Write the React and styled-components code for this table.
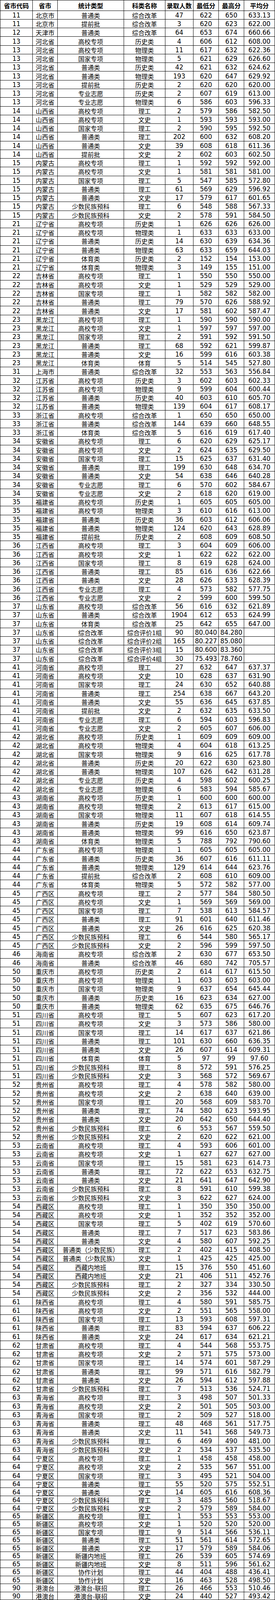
import React from 'react';
import styled, { createGlobalStyle } from 'styled-components';

const GlobalStyle = createGlobalStyle`
  html, body {
    margin: 0;
    padding: 0;
    background: #fff;
  }
`;

const raw = `11 北京市 普通类 综合改革 47 622 650 633.13
11 北京市 提前批 综合改革 3 620 623 622.00
12 天津市 普通类 综合改革 64 653 674 660.66
13 河北省 高校专项 历史类 4 606 612 608.00
13 河北省 高校专项 物理类 11 617 632 622.36
13 河北省 国家专项 物理类 5 621 629 626.60
13 河北省 普通类 历史类 42 621 632 624.62
13 河北省 普通类 物理类 193 620 647 629.92
13 河北省 提前批 历史类 2 620 620 620.00
13 河北省 专业志愿 历史类 2 607 619 613.00
13 河北省 专业志愿 物理类 6 586 603 596.33
14 山西省 高校专项 理工 2 579 586 582.50
14 山西省 高校专项 文史 1 593 593 593.00
14 山西省 国家专项 理工 2 590 595 592.50
14 山西省 普通类 理工 202 600 632 608.20
14 山西省 普通类 文史 39 608 618 611.36
14 山西省 提前批 文史 2 602 603 602.50
15 内蒙古 高校专项 理工 1 592 592 592.00
15 内蒙古 高校专项 文史 1 581 581 581.00
15 内蒙古 国家专项 理工 5 547 585 572.80
15 内蒙古 普通类 理工 61 569 629 596.92
15 内蒙古 普通类 文史 17 579 617 601.65
15 内蒙古 少数民族预科 理工 6 548 588 567.33
15 内蒙古 少数民族预科 文史 2 578 591 584.50
21 辽宁省 高校专项 历史类 1 626 626 626.00
21 辽宁省 高校专项 物理类 1 633 633 633.00
21 辽宁省 普通类 历史类 14 630 639 634.36
21 辽宁省 普通类 物理类 63 633 659 644.03
21 辽宁省 体育类 历史类 2 152 154 153.00
21 辽宁省 体育类 物理类 3 149 155 151.00
22 吉林省 高校专项 理工 1 550 550 550.00
22 吉林省 高校专项 文史 1 529 529 529.00
22 吉林省 国家专项 理工 1 582 582 582.00
22 吉林省 普通类 理工 79 570 626 588.92
22 吉林省 普通类 文史 17 581 602 587.47
23 黑龙江 高校专项 理工 1 590 590 590.00
23 黑龙江 高校专项 文史 1 597 597 597.00
23 黑龙江 国家专项 理工 2 591 592 591.50
23 黑龙江 普通类 理工 68 592 621 599.87
23 黑龙江 普通类 文史 16 599 616 603.38
23 黑龙江 体育类 体育 5 514 545 527.80
31 上海市 普通类 综合改革 32 553 563 556.84
32 江苏省 高校专项 历史类 3 602 603 602.33
32 江苏省 高校专项 物理类 9 599 604 600.44
32 江苏省 普通类 历史类 40 603 610 605.70
32 江苏省 普通类 物理类 139 604 617 608.17
33 浙江省 高校专项 综合改革 1 650 650 650.00
33 浙江省 普通类 综合改革 144 639 660 648.55
33 浙江省 体育类 综合改革 5 616 619 617.40
34 安徽省 高校专项 理工 6 620 629 625.17
34 安徽省 高校专项 文史 2 624 635 629.50
34 安徽省 国家专项 理工 15 625 637 631.40
34 安徽省 普通类 理工 199 630 648 634.70
34 安徽省 普通类 文史 54 638 646 640.28
34 安徽省 专业志愿 理工 6 570 602 584.67
34 安徽省 专业志愿 文史 2 618 620 619.00
35 福建省 高校专项 历史类 1 605 605 605.00
35 福建省 高校专项 物理类 3 610 616 613.00
35 福建省 普通类 历史类 36 603 612 606.06
35 福建省 普通类 物理类 124 620 643 628.89
35 福建省 提前批 历史类 2 608 609 608.50
36 江西省 高校专项 理工 3 604 609 606.00
36 江西省 高校专项 文史 1 622 622 622.00
36 江西省 国家专项 理工 8 619 628 624.00
36 江西省 普通类 理工 85 616 636 622.66
36 江西省 普通类 文史 28 626 633 628.39
36 江西省 专业志愿 理工 4 573 582 577.75
36 江西省 专业志愿 文史 2 599 600 599.50
37 山东省 高校专项 综合改革 56 616 632 621.89
37 山东省 普通类 综合改革 1904 612 653 624.99
37 山东省 体育类 综合改革 25 642 655 647.00
37 山东省 综合改革 综合评价1组 90 80.040 84.280
37 山东省 综合改革 综合评价2组 165 80.227 85.080
37 山东省 综合改革 综合评价3组 15 80.600 83.360
37 山东省 综合改革 综合评价4组 30 75.493 78.760
41 河南省 高校专项 理工 27 632 647 637.37
41 河南省 高校专项 文史 10 628 637 631.90
41 河南省 国家专项 理工 24 630 652 640.88
41 河南省 普通类 理工 254 638 667 643.20
41 河南省 普通类 文史 55 636 645 637.85
41 河南省 提前批 文史 2 632 635 633.50
41 河南省 专业志愿 理工 6 594 603 596.83
41 河南省 专业志愿 文史 2 605 607 606.00
42 湖北省 高校专项 历史类 1 609 609 609.00
42 湖北省 高校专项 物理类 4 604 618 613.25
42 湖北省 国家专项 物理类 9 616 625 617.78
42 湖北省 普通类 历史类 20 622 630 623.80
42 湖北省 普通类 物理类 107 626 642 631.28
42 湖北省 专业志愿 历史类 4 598 602 600.25
42 湖北省 专业志愿 物理类 6 583 594 585.67
43 湖南省 高校专项 历史类 1 600 600 600.00
43 湖南省 高校专项 物理类 2 613 617 615.00
43 湖南省 国家专项 物理类 11 607 618 614.55
43 湖南省 普通类 历史类 19 608 614 609.74
43 湖南省 普通类 物理类 99 616 650 623.87
43 湖南省 体育类 物理类 5 788 792 790.60
44 广东省 高校专项 物理类 1 605 605 605.00
44 广东省 普通类 历史类 36 607 616 611.11
44 广东省 普通类 物理类 129 614 644 623.76
44 广东省 提前批 综合改革 2 608 610 609.00
44 广东省 体育类 物理类 5 572 582 577.00
45 广西区 高校专项 理工 2 577 584 580.50
45 广西区 高校专项 文史 1 569 569 569.00
45 广西区 国家专项 理工 7 538 613 584.57
45 广西区 普通类 理工 91 601 640 611.46
45 广西区 普通类 文史 26 616 625 620.38
45 广西区 少数民族预科 理工 6 544 580 565.17
45 广西区 少数民族预科 文史 2 596 599 597.50
46 海南省 高校专项 综合改革 2 630 677 653.50
46 海南省 普通类 综合改革 46 680 742 705.57
50 重庆市 高校专项 历史类 2 614 617 615.50
50 重庆市 高校专项 物理类 1 603 603 603.00
50 重庆市 国家专项 物理类 9 637 654 645.44
50 重庆市 普通类 历史类 16 623 634 627.00
50 重庆市 普通类 物理类 62 635 675 646.76
51 四川省 高校专项 理工 5 607 623 617.20
51 四川省 高校专项 文史 3 573 586 580.00
51 四川省 国家专项 理工 14 617 637 621.86
51 四川省 普通类 理工 101 630 660 636.35
51 四川省 普通类 文史 26 607 614 609.31
51 四川省 体育类 体育 5 97 99 97.60
51 四川省 少数民族预科 理工 8 572 591 576.25
51 四川省 少数民族预科 文史 3 568 572 569.67
52 贵州省 高校专项 理工 4 578 582 580.00
52 贵州省 高校专项 文史 2 638 640 639.00
52 贵州省 国家专项 理工 20 568 609 583.70
52 贵州省 普通类 理工 74 580 623 593.95
52 贵州省 普通类 文史 20 642 650 644.40
52 贵州省 少数民族预科 理工 6 553 567 559.50
52 贵州省 少数民族预科 文史 2 620 622 621.00
53 云南省 高校专项 理工 4 593 606 601.00
53 云南省 高校专项 文史 1 627 627 627.00
53 云南省 国家专项 理工 15 581 623 614.73
53 云南省 普通类 理工 72 622 653 632.75
53 云南省 普通类 文史 21 641 647 642.90
53 云南省 少数民族预科 理工 8 591 610 599.38
53 云南省 少数民族预科 文史 3 622 627 624.00
54 西藏区 高校专项 理工 1 350 350 350.00
54 西藏区 高校专项 文史 1 352 352 352.00
54 西藏区 国家专项 理工 5 402 619 570.60
54 西藏区 普通类 理工 7 517 623 583.86
54 西藏区 普通类 文史 4 580 607 592.25
54 西藏区 普通类（少数民族） 理工 2 402 415 408.50
54 西藏区 普通类（少数民族） 文史 1 425 425 425.00
54 西藏区 西藏内地班 理工 15 376 550 451.60
54 西藏区 西藏内地班 文史 21 406 511 452.76
54 西藏区 少数民族预科 理工 2 327 334 330.50
54 西藏区 少数民族预科 文史 2 356 532 444.00
61 陕西省 高校专项 理工 4 580 591 585.75
61 陕西省 高校专项 文史 2 551 565 558.00
61 陕西省 国家专项 理工 13 593 608 597.31
61 陕西省 普通类 理工 83 594 637 606.22
61 陕西省 普通类 文史 24 617 634 621.21
62 甘肃省 高校专项 理工 4 544 568 553.75
62 甘肃省 高校专项 文史 2 571 575 573.00
62 甘肃省 国家专项 理工 14 574 601 587.29
62 甘肃省 普通类 理工 99 571 616 582.79
62 甘肃省 普通类 文史 26 594 612 597.88
62 甘肃省 少数民族预科 理工 7 513 536 524.71
63 青海省 高校专项 理工 3 498 507 501.33
63 青海省 高校专项 文史 2 501 505 503.00
63 青海省 国家专项 理工 2 509 527 518.00
63 青海省 普通类 理工 48 468 561 517.75
63 青海省 普通类 文史 11 541 568 549.73
63 青海省 少数民族预科 理工 6 469 490 481.00
63 青海省 少数民族预科 文史 2 534 537 535.50
64 宁夏区 高校专项 理工 1 458 458 458.00
64 宁夏区 高校专项 文史 2 535 567 551.00
64 宁夏区 国家专项 理工 3 495 521 504.00
64 宁夏区 普通类 理工 55 520 575 552.51
64 宁夏区 普通类 文史 14 605 616 608.36
64 宁夏区 少数民族预科 理工 3 485 560 518.67
64 宁夏区 少数民族预科 文史 2 579 589 584.00
65 新疆区 高校专项 理工 1 553 553 553.00
65 新疆区 高校专项 文史 1 520 520 520.00
65 新疆区 国家专项 理工 9 514 566 536.11
65 新疆区 普通类 理工 51 561 614 572.65
65 新疆区 普通类 文史 17 579 589 584.06
65 新疆区 新疆内地班 理工 26 539 605 574.69
65 新疆区 新疆内地班 文史 8 511 596 561.62
65 新疆区 协作计划 理工 44 404 488 436.41
65 新疆区 协作计划 文史 16 463 528 498.50
90 港澳台 港澳台-联招 理工 26 466 553 510.46
90 港澳台 港澳台-联招 文史 24 440 527 493.42`;

const rows = raw.split('\n').map((line) => {
  const cells = line.trim().split(/\s+/);
  while (cells.length < 8) cells.push('');
  return cells;
});

const headers = ['省市代码', '省市', '统计类型', '科类名称', '录取人数', '最低分', '最高分', '平均分'];
const numericCols = [0, 4, 5, 6, 7];

// the last rows of the sheet were captured a bit tighter (23 vs 25)
const SHORT_FROM = 169;
const shortCount = rows.length - SHORT_FROM;

// rows share the window height in the sheet's own 30 / 25 / 23 proportions
const Sheet = styled.div`
  display: grid;
  grid-template-columns: 83px 64px 170px 106px 72px 65px 65px 79px;
  grid-template-rows:
    minmax(0, 30fr)
    repeat(${SHORT_FROM}, minmax(0, 25fr))
    repeat(${shortCount}, minmax(0, 23fr));
  width: max-content;
  height: 100vh;
  box-sizing: border-box;
  border-top: 1px solid #000;
  border-left: 1px solid #000;
  background: #fff;
  color: #000;
  overflow: hidden;
`;

const HeadCell = styled.div`
  min-width: 0;
  min-height: 0;
  box-sizing: border-box;
  border-right: 1px solid #000;
  border-bottom: 1px solid #000;
  display: flex;
  align-items: center;
  justify-content: center;
  font-family: "Noto Sans CJK SC", sans-serif;
  font-weight: 700;
  font-size: 16px;
  line-height: 1;
  white-space: nowrap;
  overflow: hidden;
`;

const Cell = styled.div`
  min-width: 0;
  min-height: 0;
  box-sizing: border-box;
  border-right: 1px solid #000;
  border-bottom: 1px solid #000;
  display: flex;
  align-items: center;
  justify-content: center;
  padding-top: 1px;
  line-height: 1;
  white-space: nowrap;
  overflow: hidden;
  font-family: ${(p) =>
    p.$num
      ? '"Liberation Sans Narrow", "DejaVu Sans Condensed", "Liberation Sans", sans-serif'
      : '"Noto Sans CJK SC", sans-serif'};
  font-size: ${(p) => (p.$num ? 18 : 16)}px;
`;

export default function App() {
  return (
    <>
      <GlobalStyle />
      <Sheet>
        {headers.map((h) => (
          <HeadCell key={h}>{h}</HeadCell>
        ))}
        {rows.map((row, r) =>
          row.map((value, c) => (
            <Cell key={r + '-' + c} $num={numericCols.includes(c)}>
              {value}
            </Cell>
          ))
        )}
      </Sheet>
    </>
  );
}
